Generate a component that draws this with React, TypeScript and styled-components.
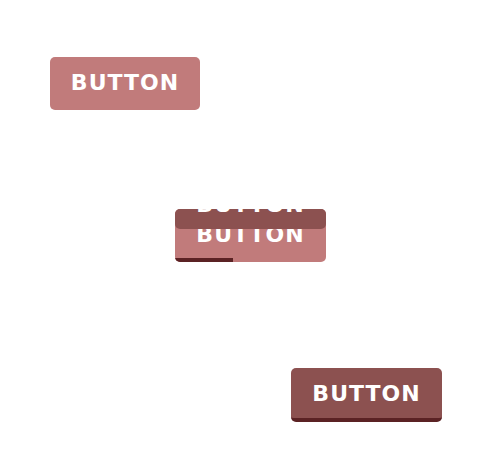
import styled, { createGlobalStyle } from 'styled-components';

const GlobalStyle = createGlobalStyle`
  html, body {
    margin: 0;
    padding: 0;
    background: #ffffff;
    font-family: 'DejaVu Sans', Verdana, sans-serif;
  }
`;

const BASE = '#c17b7b';
const DARK = '#8c5150';
const DEEP = '#5b2224';

// three states of the same button, stepped down the page
const Stage = styled.div`
  display: grid;
  grid-template-columns: 50px 125px 116px 151px;
  grid-template-rows: 53px 99px 53px 106px 54px;
  padding-top: 57px;
  width: 500px;
  height: 472px;
  box-sizing: border-box;
`;

const Cell = styled.div<{ $col: number; $row: number }>`
  grid-column: ${(p) => p.$col} / span 2;
  grid-row: ${(p) => p.$row};
`;

const Button = styled.button<{ $tone?: 'idle' | 'pressed' }>`
  position: relative;
  overflow: hidden;
  display: flex;
  align-items: center;
  justify-content: center;
  box-sizing: border-box;
  width: 151px;
  height: 100%;
  padding: 0 0 ${(p) => (p.$tone === 'pressed' ? 0 : 3)}px;
  border: none;
  border-radius: 5px;
  background: ${(p) => (p.$tone === 'pressed' ? DARK : BASE)};
  border-bottom: ${(p) => (p.$tone === 'pressed' ? `4px solid ${DEEP}` : 'none')};
  color: #ffffff;
  font-family: 'DejaVu Sans', Verdana, sans-serif;
  font-size: 22px;
  font-weight: 700;
  letter-spacing: 1px;
  cursor: pointer;
`;

const FirstButton = styled(Button)`
  width: 150px;
`;

const Cover = styled.div`
  position: absolute;
  left: 0;
  top: 0;
  width: 100%;
  height: 53px;
  box-sizing: border-box;
  display: flex;
  align-items: center;
  justify-content: center;
  padding-top: 3px;
  border-radius: 5px;
  background: ${DARK};
  transform: translateY(-33px);
`;

const Progress = styled.div`
  position: absolute;
  left: 0;
  bottom: 0;
  height: 4px;
  background: ${DEEP};
`;

export default function App() {
  const progress = 58;
  return (
    <>
      <GlobalStyle />
      <Stage>
        <Cell $col={2} $row={1}>
          <FirstButton>BUTTON</FirstButton>
        </Cell>
        <Cell $col={3} $row={3}>
          <Button>
            BUTTON
            <Cover>BUTTON</Cover>
            <Progress style={{ width: progress }} />
          </Button>
        </Cell>
        <Cell $col={4} $row={5}>
          <Button $tone="pressed">BUTTON</Button>
        </Cell>
      </Stage>
    </>
  );
}
